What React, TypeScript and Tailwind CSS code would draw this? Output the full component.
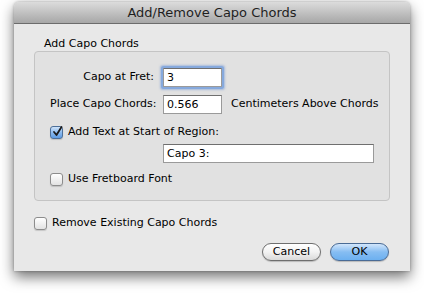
import React from "react";

const font = { fontFamily: '"DejaVu Sans", "Liberation Sans", sans-serif' };

function CheckBox({ checked = false }: { checked?: boolean }) {
  return (
    <span
      className={`relative inline-block h-[13px] w-[13px] shrink-0 rounded-[3px] border ${
        checked
          ? "border-[#4d6f99] bg-gradient-to-b from-[#cfe3f9] via-[#8dbbef] to-[#5d9be3]"
          : "border-[#8c8c8c] bg-gradient-to-b from-[#ffffff] to-[#e2e2e2]"
      } shadow-[0_1px_1px_rgba(0,0,0,0.15)]`}
    >
      {checked && (
        <svg viewBox="0 0 13 13" className="absolute -top-[2px] left-[0px] h-[13px] w-[13px]">
          <path d="M3 7 L5.5 10 L10.5 2" fill="none" stroke="#1b1b1b" strokeWidth="1.8" strokeLinecap="round" strokeLinejoin="round" />
        </svg>
      )}
    </span>
  );
}

function Field({ value, width, focused = false }: { value: string; width: string; focused?: boolean }) {
  return (
    <div
      className={`${width} h-[19px] shrink-0 border border-[#9a9a9a] border-t-[#6f6f6f] bg-white pl-[3px] text-[11px] leading-[17px] text-black ${
        focused ? "rounded-[1px] shadow-[0_0_0_2px_#86a9dd,0_0_2px_3px_rgba(110,150,215,0.5)]" : ""
      }`}
    >
      {value}
    </div>
  );
}

export default function App() {
  return (
    <div className="h-[295px] w-[424px] bg-white pt-[2px] pl-[14px]" style={font}>
      <div className="flex h-[269px] w-[396px] flex-col overflow-hidden rounded-t-[5px] bg-[#e8e8e8] shadow-[0_6px_14px_rgba(0,0,0,0.55),0_0_3px_rgba(0,0,0,0.3)]">
        <div className="flex h-[22px] shrink-0 items-center justify-center border-b border-[#6c6c6c] bg-gradient-to-b from-[#dcdcdc] to-[#a7a7a7] text-[13px] text-[#1f1f1f]">
          Add/Remove Capo Chords
        </div>
        <div className="flex flex-1 flex-col px-[20px] pt-[13px] text-[11px] text-black">
          <div className="pl-[10px] leading-[13px]">Add Capo Chords</div>
          <div className="mt-[1px] flex h-[150px] flex-col rounded-[4px] border border-[#c4c4c4] bg-[#e1e1e1] pl-[15px] pr-[15px] pt-[16px]">
            <div className="flex items-center">
              <div className="w-[113px] shrink-0 whitespace-nowrap pr-[9px] text-right">Capo at Fret:</div>
              <Field value="3" width="w-[59px]" focused />
            </div>
            <div className="mt-[8px] flex items-center">
              <div className="w-[113px] shrink-0 whitespace-nowrap pr-[9px] text-right">Place Capo Chords:</div>
              <Field value="0.566" width="w-[59px]" />
              <div className="ml-[9px] whitespace-nowrap">Centimeters Above Chords</div>
            </div>
            <div className="mt-[11px] flex h-[14px] items-center gap-[5px]">
              <CheckBox checked />
              <span>Add Text at Start of Region:</span>
            </div>
            <div className="mt-[5px] flex">
              <div className="w-[113px] shrink-0" />
              <Field value="Capo 3:" width="w-[211px]" />
            </div>
            <div className="mt-[9px] flex h-[14px] items-center gap-[5px]">
              <CheckBox />
              <span>Use Fretboard Font</span>
            </div>
          </div>
          <div className="mt-[15px] flex h-[14px] items-center gap-[5px]">
            <CheckBox />
            <span>Remove Existing Capo Chords</span>
          </div>
          <div className="mt-[13px] flex justify-end gap-[9px] pr-[1px]">
            <button className="h-[18px] w-[59px] rounded-full border border-[#6e6e6e] bg-gradient-to-b from-[#ffffff] via-[#f2f2f2] to-[#dadada] text-[11px] leading-[16px] text-black shadow-[0_1px_1px_rgba(0,0,0,0.2)]">
              Cancel
            </button>
            <button className="h-[18px] w-[59px] rounded-full border border-[#4a6b95] bg-gradient-to-b from-[#d2e6fb] via-[#86bdf2] to-[#6cb0f0] text-[11px] leading-[16px] text-black shadow-[0_1px_1px_rgba(0,0,0,0.2)]">
              OK
            </button>
          </div>
        </div>
      </div>
    </div>
  );
}
